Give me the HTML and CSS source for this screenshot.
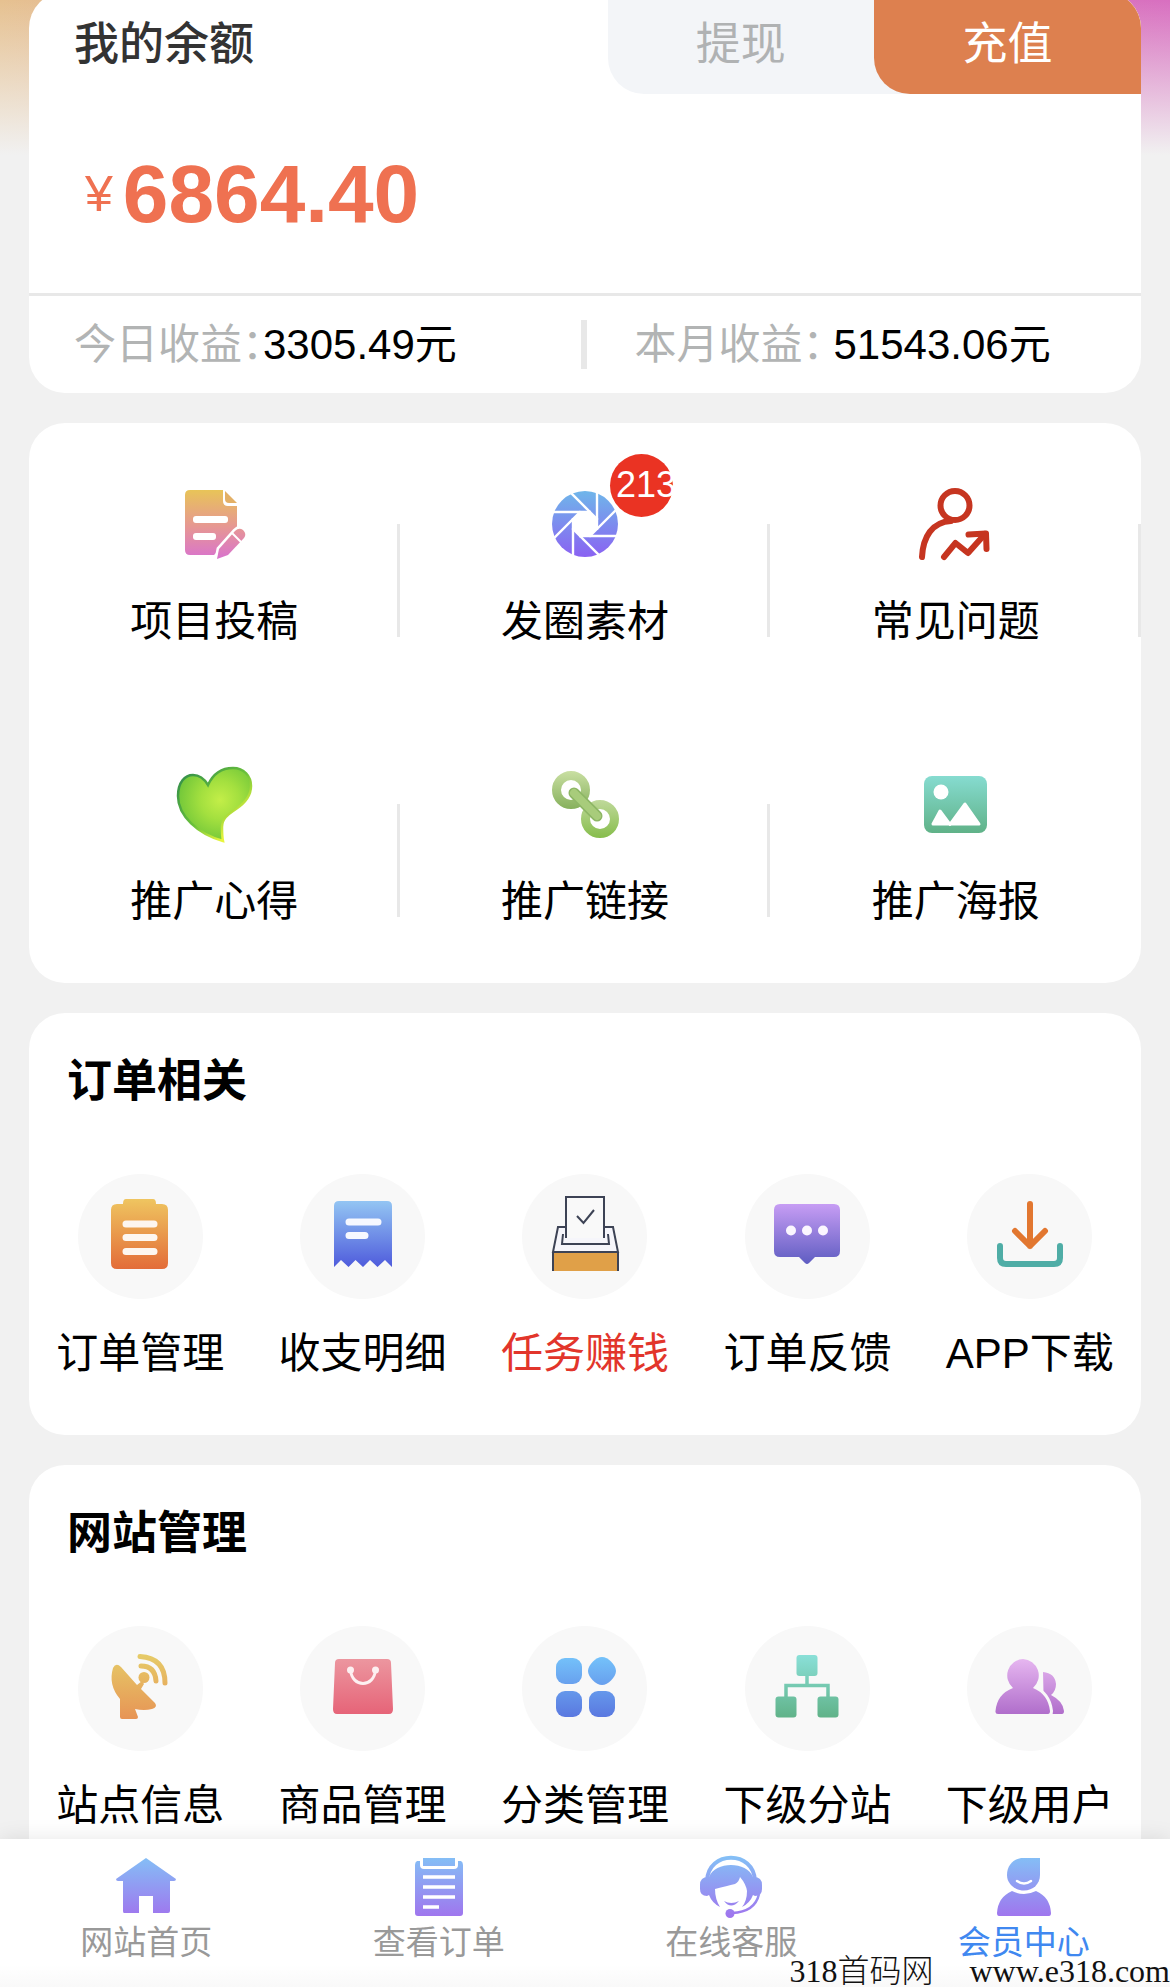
FILE: index.html
```html
<!DOCTYPE html>
<html lang="zh-CN">
<head>
	<meta charset="UTF-8">
	<meta name="viewport" content="width=device-width, initial-scale=1.0">
	<title>会员中心</title>
	<link rel="stylesheet" href="styles.css">
</head>
<body>
	<svg class="defs" width="0" height="0" aria-hidden="true">
		<defs>
			<linearGradient id="g-doc" gradientUnits="userSpaceOnUse" x1="0" y1="8" x2="0" y2="76">
				<stop offset="0" stop-color="#e8c458"/>
				<stop offset="0.55" stop-color="#e69694"/>
				<stop offset="1" stop-color="#d974cc"/>
			</linearGradient>
			<linearGradient id="g-lens" gradientUnits="userSpaceOnUse" x1="0" y1="-33" x2="0" y2="33">
				<stop offset="0" stop-color="#6fb6ea"/>
				<stop offset="1" stop-color="#8a62f2"/>
			</linearGradient>
			<radialGradient id="g-heart" gradientUnits="userSpaceOnUse" cx="48" cy="38" r="48">
				<stop offset="0" stop-color="#c3ee48"/>
				<stop offset="0.4" stop-color="#a4e03f"/>
				<stop offset="1" stop-color="#66c138"/>
			</radialGradient>
			<linearGradient id="g-heart-edge" gradientUnits="userSpaceOnUse" x1="10" y1="14" x2="62" y2="66">
				<stop offset="0" stop-color="#35914a"/>
				<stop offset="0.6" stop-color="#6cc23a"/>
				<stop offset="1" stop-color="#e8f53c"/>
			</linearGradient>
			<linearGradient id="g-ring1" gradientUnits="userSpaceOnUse" x1="0" y1="9" x2="0" y2="47">
				<stop offset="0" stop-color="#c9dfa2"/>
				<stop offset="1" stop-color="#86b05c"/>
			</linearGradient>
			<linearGradient id="g-ring2" gradientUnits="userSpaceOnUse" x1="0" y1="38" x2="0" y2="76">
				<stop offset="0" stop-color="#bfd99a"/>
				<stop offset="1" stop-color="#86bd4c"/>
			</linearGradient>
			<linearGradient id="g-green" gradientUnits="userSpaceOnUse" x1="0" y1="8" x2="0" y2="71">
				<stop offset="0" stop-color="#8ae0d8"/>
				<stop offset="1" stop-color="#60b288"/>
			</linearGradient>
			<linearGradient id="g-orange" gradientUnits="userSpaceOnUse" x1="0" y1="4" x2="0" y2="74">
				<stop offset="0" stop-color="#efc560"/>
				<stop offset="1" stop-color="#e36c38"/>
			</linearGradient>
			<linearGradient id="g-receipt" gradientUnits="userSpaceOnUse" x1="0" y1="6" x2="0" y2="72">
				<stop offset="0" stop-color="#93c5f3"/>
				<stop offset="1" stop-color="#4f5cdc"/>
			</linearGradient>
			<linearGradient id="g-chat" gradientUnits="userSpaceOnUse" x1="0" y1="9" x2="0" y2="69">
				<stop offset="0" stop-color="#c79df4"/>
				<stop offset="1" stop-color="#5f5dc2"/>
			</linearGradient>
			<linearGradient id="g-dish" gradientUnits="userSpaceOnUse" x1="0" y1="8" x2="0" y2="72">
				<stop offset="0" stop-color="#e6cb68"/>
				<stop offset="1" stop-color="#e79455"/>
			</linearGradient>
			<linearGradient id="g-bag" gradientUnits="userSpaceOnUse" x1="0" y1="12" x2="0" y2="67">
				<stop offset="0" stop-color="#ec969f"/>
				<stop offset="1" stop-color="#e66478"/>
			</linearGradient>
			<linearGradient id="g-blocks" gradientUnits="userSpaceOnUse" x1="0" y1="10" x2="0" y2="70">
				<stop offset="0" stop-color="#74c2fa"/>
				<stop offset="1" stop-color="#5a78e0"/>
			</linearGradient>
			<linearGradient id="g-users" gradientUnits="userSpaceOnUse" x1="0" y1="12" x2="0" y2="67">
				<stop offset="0" stop-color="#e6b6f0"/>
				<stop offset="1" stop-color="#b06ecb"/>
			</linearGradient>
			<linearGradient id="g-nav" gradientUnits="userSpaceOnUse" x1="0" y1="2" x2="0" y2="61">
				<stop offset="0" stop-color="#84bff6"/>
				<stop offset="1" stop-color="#9f76ee"/>
			</linearGradient>
		</defs>
	</svg>

	<main class="page">
		<section class="card balance">
			<div class="balance-head">
				<h1 class="balance-title">我的余额</h1>
				<div class="tabs">
					<button class="tab" type="button">提现</button>
					<button class="tab tab-active" type="button">充值</button>
				</div>
			</div>
			<div class="amount"><span class="currency">¥</span><strong>6864.40</strong></div>
			<div class="income">
				<div class="income-item">
					<span class="income-label">今日收益：</span><span>3305.49元</span>
				</div>
				<div class="income-line"></div>
				<div class="income-item month">
					<span class="income-label">本月收益：</span><span>51543.06元</span>
				</div>
			</div>
		</section>

		<section class="card links">
			<a class="link-item line" href="#">
				<svg class="icon" viewBox="0 0 84 84">
					<path fill="url(#g-doc)" d="M18 8H51V19Q51 24 56 24H65V50L42 73H18Q13 73 13 68V13Q13 8 18 8Z"/>
					<path fill="#e3b066" d="M53 9L65 21H57Q53 21 53 17Z"/>
					<rect x="21" y="34" width="35" height="7" rx="3" fill="#fff"/>
					<rect x="21" y="51" width="23" height="7" rx="3" fill="#fff"/>
					<path fill="url(#g-doc)" stroke="#fff" stroke-width="5" paint-order="stroke" d="M45 77L47 67L63 49Q67 45 71 48Q75 52 72 56L56 73Z"/>
					<path stroke="#fff" stroke-width="2" d="M60 51L69 60"/>
				</svg>
				<span>项目投稿</span>
			</a>
			<a class="link-item line" href="#">
				<span class="icon-wrap">
					<svg class="icon" viewBox="-42 -42 84 84">
						<circle r="33" fill="url(#g-lens)"/>
						<path fill="#fff" d="M-12 -5L-12 5L-5 12L5 12L12 5L12 -5L5 -12L-5 -12Z"/>
						<g stroke="#fff" stroke-width="2.4">
							<path d="M-12 -6V34"/>
							<path d="M-12 -6V34" transform="rotate(45)"/>
							<path d="M-12 -6V34" transform="rotate(90)"/>
							<path d="M-12 -6V34" transform="rotate(135)"/>
							<path d="M-12 -6V34" transform="rotate(180)"/>
							<path d="M-12 -6V34" transform="rotate(225)"/>
							<path d="M-12 -6V34" transform="rotate(270)"/>
							<path d="M-12 -6V34" transform="rotate(315)"/>
						</g>
					</svg>
					<span class="badge">213</span>
				</span>
				<span>发圈素材</span>
			</a>
			<a class="link-item line" href="#">
				<svg class="icon" viewBox="0 0 84 84" fill="none" stroke="#c63520" stroke-width="6" stroke-linecap="round" stroke-linejoin="round">
					<circle cx="41" cy="23.5" r="14.5"/>
					<path d="M8 75C9 55 18 40 37 39"/>
					<path d="M30 75L41.5 61L54 71L71 52"/>
					<path d="M54.5 52.5L72 51.5L72.5 67"/>
				</svg>
				<span>常见问题</span>
			</a>
			<a class="link-item line" href="#">
				<svg class="icon" viewBox="0 0 84 84">
					<path fill="url(#g-heart)" stroke="url(#g-heart-edge)" stroke-width="2.5" d="M36 23C41 12 50 6 61 6C72 6 79 14 79 24C79 34 73 41 64 47C55 53 50 57 50 65C50 70 50 74 51 79C26 72 6 54 6 34C6 20 13 13 21 13C29 13 33 18 36 23Z"/>
				</svg>
				<span>推广心得</span>
			</a>
			<a class="link-item line" href="#">
				<svg class="icon" viewBox="0 0 84 84" fill="none" stroke-width="9">
					<circle cx="28" cy="28" r="14.5" stroke="url(#g-ring1)"/>
					<circle cx="57" cy="57" r="14.5" stroke="url(#g-ring2)"/>
					<path stroke="#8db665" stroke-width="11" stroke-linecap="round" d="M31 31L54 54"/>
					<path stroke="#a8cc7b" stroke-width="8" stroke-linecap="round" d="M31 31L54 54"/>
				</svg>
				<span>推广链接</span>
			</a>
			<a class="link-item" href="#">
				<svg class="icon" viewBox="0 0 84 84">
					<rect x="10" y="14" width="63" height="57" rx="8" fill="url(#g-green)"/>
					<circle cx="27" cy="30" r="7.5" fill="#fff"/>
					<path fill="#fff" stroke="#fff" stroke-width="3" stroke-linejoin="round" d="M19 62L26 49L36 62.5L51 42L65 62Z"/>
				</svg>
				<span>推广海报</span>
			</a>
		</section>

		<section class="card menu">
			<h2 class="menu-title">订单相关</h2>
			<div class="menu-list">
				<a class="menu-item" href="#">
					<span class="round"><svg class="icon" viewBox="0 0 84 84">
						<path fill="url(#g-orange)" d="M28 4H55Q58 4 58 9H64Q70 9 70 15V68Q70 74 64 74H19Q13 74 13 68V15Q13 9 19 9H25Q25 4 28 4Z"/>
						<path stroke="#fdf6f0" stroke-width="7" stroke-linecap="round" d="M28 29H56M28 42.5H56M28 56.5H56"/>
					</svg></span>
					<span>订单管理</span>
				</a>
				<a class="menu-item" href="#">
					<span class="round"><svg class="icon" viewBox="0 0 84 84">
						<path fill="url(#g-receipt)" d="M18 6H66Q71 6 71 11V72L64 65L56.5 72L49 65L42 72L34.5 65L27.5 72L20 65L13 72V11Q13 6 18 6Z"/>
						<path stroke="#f6f8ff" stroke-width="7" stroke-linecap="round" d="M28 27H57M28 40.5H44"/>
					</svg></span>
					<span>收支明细</span>
				</a>
				<a class="menu-item hot" href="#">
					<span class="round"><svg class="icon" viewBox="0 0 84 84" fill="none" stroke="#3d4355" stroke-width="2">
						<path fill="#f6f6fb" d="M23 32H15L10 57H75L70 32H61"/>
						<path fill="#e0a048" stroke="none" d="M11 58H74V76H11Z"/>
						<path d="M10 57V76M75 57V76M20 39L19 49H66L65 39"/>
						<path fill="#f9f9f9" d="M23 43V2H61V43"/>
						<path d="M34 21L40.5 28L51 15"/>
					</svg></span>
					<span>任务赚钱</span>
				</a>
				<a class="menu-item" href="#">
					<span class="round"><svg class="icon" viewBox="0 0 84 84">
						<path fill="url(#g-chat)" d="M15 9H69Q75 9 75 15V56Q75 62 69 62H50L44 68Q42 70 40 68L34 62H15Q9 62 9 56V15Q9 9 15 9Z"/>
						<g fill="#fbf6ff"><circle cx="26" cy="35.5" r="5"/><circle cx="42" cy="35.5" r="5"/><circle cx="58" cy="35.5" r="5"/></g>
					</svg></span>
					<span>订单反馈</span>
				</a>
				<a class="menu-item" href="#">
					<span class="round"><svg class="icon" viewBox="0 0 84 84" fill="none" stroke-width="6" stroke-linecap="round" stroke-linejoin="round">
						<path stroke="#4fada6" d="M12 51V63Q12 69 18 69H66Q72 69 72 63V51"/>
						<path stroke="#e27730" d="M42 9V51M27 36L42 51L57 36"/>
					</svg></span>
					<span>APP下载</span>
				</a>
			</div>
		</section>

		<section class="card menu">
			<h2 class="menu-title">网站管理</h2>
			<div class="menu-list">
				<a class="menu-item" href="#">
					<span class="round"><svg class="icon" viewBox="0 0 84 84">
						<path fill="url(#g-dish)" d="M15 21Q18 15 23 20L39 38L44 34L46 37L43 42L57 56Q60 60 54 62Q46 64 37 62L40 70Q40 72 38 72H24Q22 72 22 70V52Q10 38 15 21Z"/>
						<circle cx="46" cy="30.5" r="5.5" fill="url(#g-dish)"/>
						<path fill="none" stroke="url(#g-dish)" stroke-width="5" stroke-linecap="round" d="M43 19Q57 19 58 34M42 9.5Q67 11 67 36"/>
					</svg></span>
					<span>站点信息</span>
				</a>
				<a class="menu-item" href="#">
					<span class="round"><svg class="icon" viewBox="0 0 84 84">
						<path fill="url(#g-bag)" d="M18 12H66Q70 12 70 16L72 62Q72 67 68 67H16Q12 67 12 62L14 16Q14 12 18 12Z"/>
						<g fill="#fdf0f1"><circle cx="29.5" cy="23" r="3.5"/><circle cx="54.5" cy="23" r="3.5"/></g>
						<path fill="none" stroke="#fdf0f1" stroke-width="3" d="M29.5 23C31 41 53 41 54.5 23"/>
					</svg></span>
					<span>商品管理</span>
				</a>
				<a class="menu-item" href="#">
					<span class="round"><svg class="icon" viewBox="0 0 84 84" fill="url(#g-blocks)">
						<rect x="13" y="11" width="26" height="26" rx="9"/>
						<path d="M59 10C65 10 73 18 73 24C73 30 65 38 59 38C53 38 45 30 45 24C45 18 53 10 59 10Z"/>
						<rect x="13" y="44" width="26" height="26" rx="9"/>
						<rect x="46" y="44" width="26" height="26" rx="9"/>
					</svg></span>
					<span>分类管理</span>
				</a>
				<a class="menu-item" href="#">
					<span class="round"><svg class="icon" viewBox="0 0 84 84" fill="url(#g-green)">
						<rect x="31.5" y="8" width="21" height="21" rx="3"/>
						<rect x="10.5" y="49.5" width="21" height="21" rx="3"/>
						<rect x="52.5" y="49.5" width="21" height="21" rx="3"/>
						<path fill="none" stroke="url(#g-green)" stroke-width="3.5" d="M42 28V38.5M21 50V38.5H63V50"/>
					</svg></span>
					<span>下级分站</span>
				</a>
				<a class="menu-item" href="#">
					<span class="round"><svg class="icon" viewBox="0 0 84 84" fill="url(#g-users)">
						<path d="M55 25Q67 26 68 37Q68 44 63 48Q75 54 76 64Q76 67 74 67H56Z"/>
						<path stroke="#f8f8f8" stroke-width="6" paint-order="stroke" d="M35 12A16.5 16.5 0 0 1 45 41Q60 47 62 64Q62 67 60 67H10Q7 67 7.5 64Q9 47 25 41A16.5 16.5 0 0 1 35 12Z"/>
					</svg></span>
					<span>下级用户</span>
				</a>
			</div>
		</section>
	</main>

	<nav class="nav">
		<a class="nav-item" href="#">
			<svg class="nav-icon" viewBox="0 0 64 64">
				<path fill="url(#g-nav)" d="M32 3L62 24Q62 26 60 26H56V56Q56 58 54 58H39V41H25V58H10Q9 58 9 56V26H4Q2 26 2 24Z"/>
			</svg>
			<span>网站首页</span>
		</a>
		<a class="nav-item" href="#">
			<svg class="nav-icon" viewBox="0 0 64 64">
				<path fill="url(#g-nav)" d="M10 6H13V10Q13 14 17 14H47Q51 14 51 10V6H54Q56 7 56 10V58Q56 61 53 61H11Q8 61 8 58V10Q8 7 10 6Z"/>
				<rect x="16" y="3" width="32" height="8" fill="url(#g-nav)"/>
				<path stroke="#fff" stroke-width="3.5" d="M16 22H48M16 32H48M16 42H48M16 52H32"/>
			</svg>
			<span>查看订单</span>
		</a>
		<a class="nav-item" href="#">
			<svg class="nav-icon" viewBox="0 0 64 64">
				<path fill="none" stroke="url(#g-nav)" stroke-width="4" d="M8 26C9 -5 55 -5 56 26"/>
				<path fill="url(#g-nav)" d="M10 22H9Q1 22 1 30V34Q1 41 8 41L10 40Q13 48 21 52Q16 44 16 34Q28 31 36 29Q40 27 41 22Q47 29 48 36Q48 46 43 52Q51 48 54 40L56 41Q63 41 63 34V30Q63 22 55 22H54C48 6 16 6 10 22Z"/>
				<path fill="url(#g-nav)" d="M25 46Q32 50 40 46Q32 55 25 46Z"/>
				<path fill="none" stroke="url(#g-nav)" stroke-width="2.5" d="M60 39Q56 57 33 58"/>
				<circle cx="31" cy="58.5" r="4.5" fill="url(#g-nav)"/>
			</svg>
			<span>在线客服</span>
		</a>
		<a class="nav-item current" href="#">
			<svg class="nav-icon" viewBox="0 0 64 64">
				<path fill="url(#g-nav)" d="M31 3H48V20C48 29 41 35.5 32 35.5S15 29 15 20C15 10 22 3 31 3Z"/>
				<path fill="none" stroke="#fff" stroke-width="2.5" stroke-linecap="round" d="M25 26Q32 31 39 26"/>
				<path fill="url(#g-nav)" d="M20 36Q32 42 44 36Q58 42 59 58Q59 61 57 61H7Q5 61 5 58Q6 42 20 36Z"/>
			</svg>
			<span>会员中心</span>
		</a>
		<div class="site-mark"><span>318首码网</span><span>www.e318.com</span></div>
	</nav>
</body>
</html>
```

FILE: styles.css
```css
* {
	box-sizing: border-box;
}

body {
	margin: 0;
	height: 100vh;
	display: flex;
	flex-direction: column;
	background-color: #f1f1f1;
	font-family: "Liberation Sans", "Noto Sans CJK SC", sans-serif;
	font-size: 42px;
	line-height: 62px;
	color: #000;
}

a {
	color: inherit;
	text-decoration: none;
}

h1, h2 {
	margin: 0;
	font-size: 45px;
	font-weight: 500;
}

.defs {
	position: absolute;
}

.page {
	flex: 1;
	min-height: 0;
	overflow-y: auto;
	scrollbar-width: none;
	padding: 0 29px;
	background: linear-gradient(to bottom, rgba(241, 241, 241, 0), #f1f1f1) no-repeat 0 0 / 100% 155px,
		linear-gradient(to right, #e6c190, #d86fc0) no-repeat 0 0 / 100% 155px;
}

.card {
	background-color: #fff;
	border-radius: 36px;
	margin-bottom: 30px;
	overflow: hidden;
}

/* balance */

.balance {
	margin-top: -8px;
}

.balance-head {
	display: flex;
	justify-content: space-between;
	height: 102px;
	padding-left: 45px;
}

.balance-title {
	color: #333;
	line-height: 106px;
}

.tabs {
	display: flex;
	width: 50%;
	max-width: 534px;
	border-bottom-left-radius: 36px;
	background-color: #f3f5f8;
}

.tab {
	flex: 1;
	padding: 0 0 6px;
	border: none;
	border-bottom-left-radius: 36px;
	background: none;
	font-family: inherit;
	font-size: 45px;
	color: #b0b2b3;
	cursor: pointer;
}

.tab-active {
	background-color: #dd804f;
	color: #fff;
}

.amount {
	display: flex;
	align-items: center;
	height: 202px;
	padding-left: 56px;
	border-bottom: 3px solid #e8e8e8;
	color: #ef7151;
}

.amount strong {
	font-size: 82px;
	margin-left: 10px;
}

.currency {
	font-size: 50px;
}

.income {
	display: flex;
	align-items: center;
	height: 97px;
}

.income-item {
	flex: 1;
	display: flex;
	padding-left: 45px;
	white-space: nowrap;
}

/* half-width colon */
.income-label {
	font-feature-settings: "halt";
	color: #b2b4b4;
}

.month {
	gap: 10px;
	padding-left: 48px;
}

.income-line {
	width: 6px;
	height: 49px;
	background-color: #e8e8e8;
}

/* 3 x 2 links */

.links {
	display: grid;
	grid-template-columns: repeat(3, 1fr);
}

.link-item {
	display: flex;
	flex-direction: column;
	align-items: center;
	gap: 25px;
	height: 280px;
	padding-top: 59px;
}

.line {
	background: linear-gradient(#e8e8e8, #e8e8e8) no-repeat right 101px / 3px 113px;
}

.icon {
	display: block;
	width: 84px;
	height: 84px;
}

.icon-wrap {
	position: relative;
}

.badge {
	position: absolute;
	top: -28px;
	left: 67px;
	width: 63px;
	height: 63px;
	padding-left: 6px;
	border-radius: 50%;
	background-color: #ea3323;
	color: #fff;
	font-size: 36px;
}

/* menus with round icons */

.menu {
	padding: 38px 0 50px;
}

.menu-title {
	padding-left: 38px;
	margin-bottom: 61px;
	font-weight: 700;
}

.menu-list {
	display: grid;
	grid-template-columns: repeat(5, 1fr);
}

.menu-item {
	display: flex;
	flex-direction: column;
	align-items: center;
	gap: 24px;
	white-space: nowrap;
}

.round {
	display: flex;
	justify-content: center;
	align-items: center;
	width: 125px;
	height: 125px;
	border-radius: 50%;
	background-color: #f8f8f8;
}

.hot {
	color: #e2352b;
}

/* bottom bar */

.nav {
	position: relative;
	display: flex;
	padding: 16px 0 20px;
	background: linear-gradient(#fff 85%, #f9f9f9);
	box-shadow: 0 0 20px rgba(0, 0, 0, 0.1);
}

.nav-item {
	flex: 1;
	display: flex;
	flex-direction: column;
	align-items: center;
	font-size: 33px;
	line-height: 48px;
	color: #999;
}

.nav-icon {
	display: block;
	width: 64px;
	height: 64px;
}

.current {
	color: #4088f0;
}

.site-mark {
	position: absolute;
	right: 0;
	bottom: 0;
	display: flex;
	gap: 36px;
	font-family: "Liberation Serif", "Noto Sans CJK SC", serif;
	font-size: 32px;
	font-weight: 300;
	line-height: 32px;
	color: #111;
}
```
